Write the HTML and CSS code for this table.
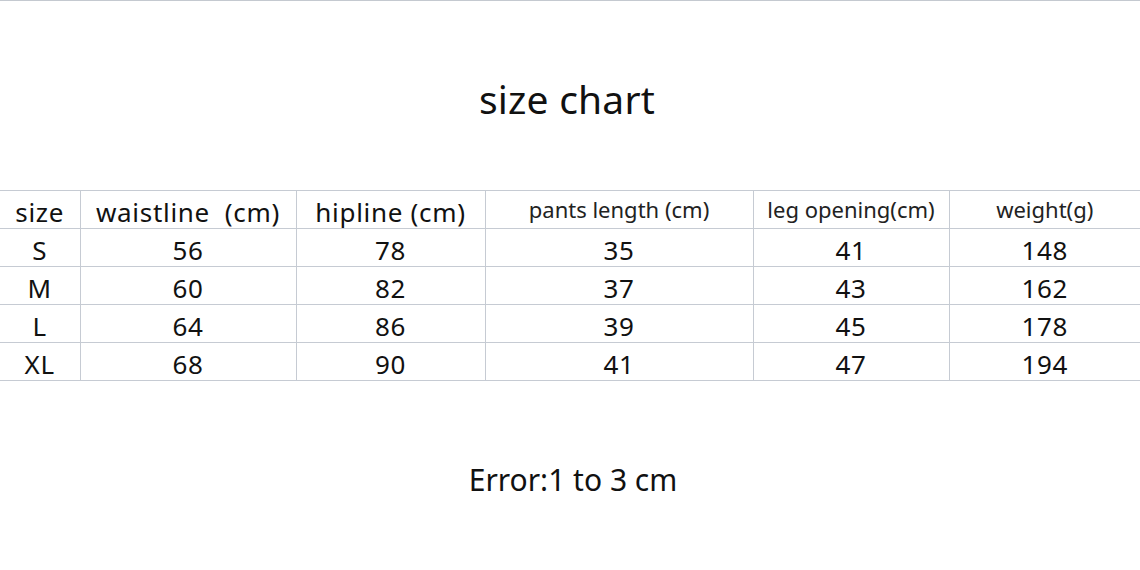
FILE: index.html
```html
<!DOCTYPE html>
<html>
<head>
<meta charset="utf-8">
<link rel="stylesheet" href="styles.css">
</head>
<body>
<div class="page">
  <h1 class="title">size chart</h1>
  <table class="chart">
    <colgroup>
      <col class="c1"><col class="c2"><col class="c3"><col class="c4"><col class="c5"><col class="c6">
    </colgroup>
    <tr class="head">
      <td class="big">size</td>
      <td class="big">waistline&nbsp;&nbsp;(cm)</td>
      <td class="big">hipline (cm)</td>
      <td class="small">pants length (cm)</td>
      <td class="small">leg opening(cm)</td>
      <td class="small">weight(g)</td>
    </tr>
    <tr><td>S</td><td>56</td><td>78</td><td>35</td><td>41</td><td>148</td></tr>
    <tr><td>M</td><td>60</td><td>82</td><td>37</td><td>43</td><td>162</td></tr>
    <tr><td>L</td><td>64</td><td>86</td><td>39</td><td>45</td><td>178</td></tr>
    <tr><td>XL</td><td>68</td><td>90</td><td>41</td><td>47</td><td>194</td></tr>
  </table>
  <p class="note">Error:1 to 3 cm</p>
</div>
</body>
</html>
```

FILE: styles.css
```css
html, body {
  margin: 0;
  padding: 0;
  background: #fff;
}
body {
  font-family: "Noto Sans", "Open Sans", sans-serif;
  color: #111;
}
.page {
  width: 1140px;
  height: 570px;
  border-top: 1px solid #c4c9d0;
  box-sizing: border-box;
}
.title {
  margin: 0;
  padding: 72px 6px 0 0;
  height: 117px;
  box-sizing: border-box;
  text-align: center;
  font-weight: 400;
  font-size: 39px;
  letter-spacing: 0.2px;
  line-height: 52px;
}
.chart {
  width: 1140px;
  margin-top: 72px;
  border-collapse: collapse;
  table-layout: fixed;
}
.c1 { width: 80px; }
.c2 { width: 216px; }
.c3 { width: 189px; }
.c4 { width: 268px; }
.c5 { width: 196px; }
.c6 { width: 191px; }
.chart td {
  height: 32px;
  padding: 5px 0 0;
  text-align: center;
  vertical-align: top;
  font-size: 26px;
  letter-spacing: 0.7px;
  line-height: 32px;
  border-top: 1px solid #c6cbd3;
  border-bottom: 1px solid #c6cbd3;
  border-left: 1px solid #c6cbd3;
}
.chart td:first-child { border-left: none; }
.chart .small {
  font-size: 22px;
  letter-spacing: 0;
  padding-top: 0;
  line-height: 36px;
  color: #222;
}
.note {
  margin: 80px 0 0;
  text-align: center;
  font-size: 30px;
  line-height: 38px;
  padding-left: 6px;
}
```
